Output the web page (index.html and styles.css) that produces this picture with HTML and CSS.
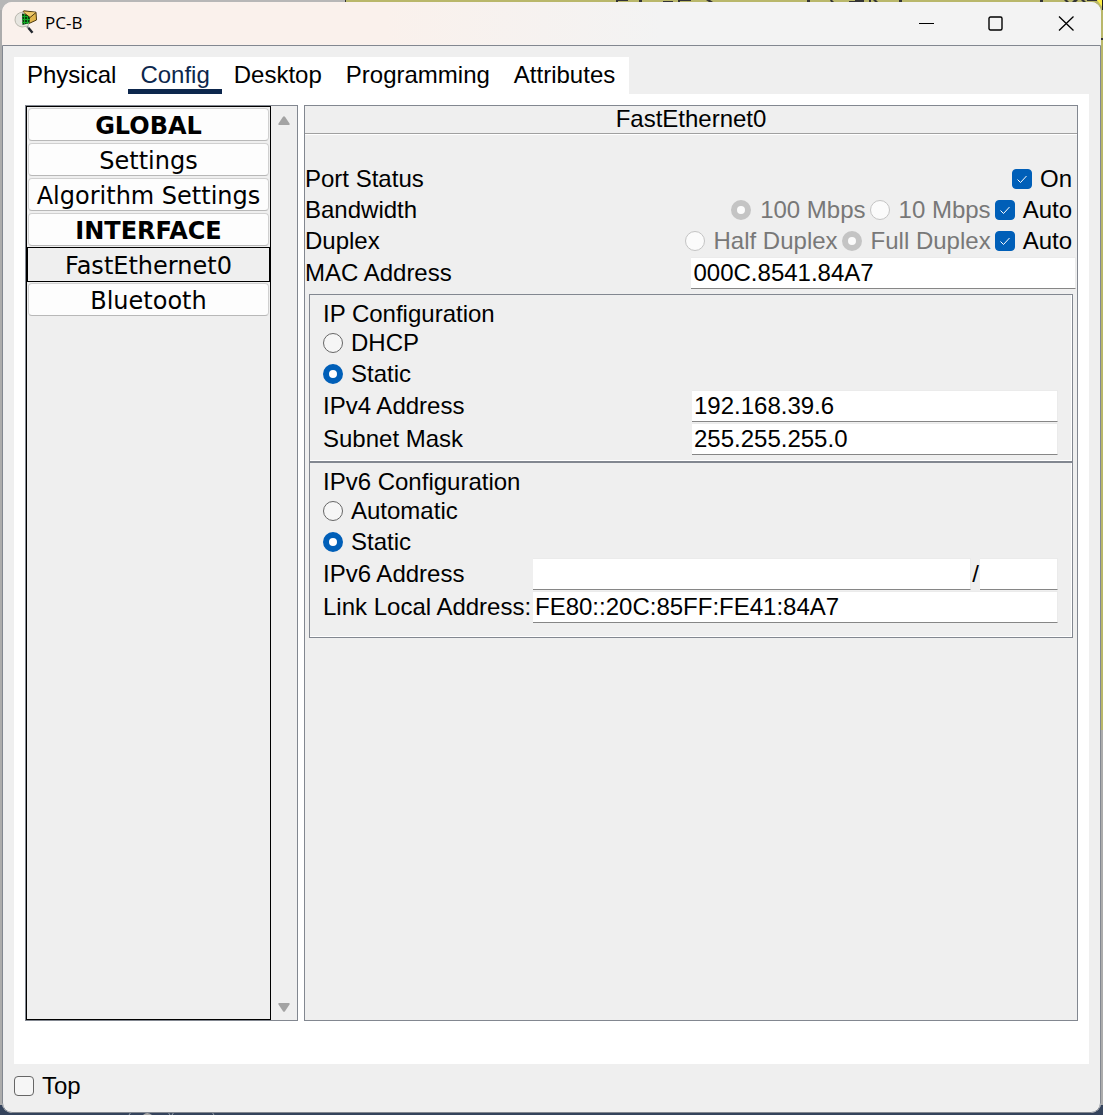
FILE: index.html
```html
<!DOCTYPE html>
<html lang="en">
<head>
<meta charset="utf-8">
<meta name="viewport" content="width=device-width, initial-scale=1">
<title>PC-B</title>
<link rel="stylesheet" href="styles.css">
</head>
<body>
<div class="desktop">
  <svg class="backdrop backdrop-top" viewBox="0 0 513 40" aria-hidden="true">
    <path d="M26 0h12v1H28v1h-2ZM49 0h3v2h-3ZM73 1h10v1H73ZM88 0h13v1H90v1h-2ZM116 0h4l3 2h-4ZM217 0h3v2h-3ZM240 0h2l2 2h-3ZM259 1h6v-1h9v2h-15ZM279 0h2v2h-2ZM283 0h3l2 2h-3ZM309 0h3v2h-3ZM450 0h3v2h-3ZM474 0h3l2 2h-3ZM484 0h4l-2 2h-4ZM491 0h3l2 2h-3ZM497 0h10v1h-10ZM511 38h2v2h-2Z" fill="#333"/>
    <path d="M507 0h6v8Z" fill="#ffef46"/>
    <path d="M512 0h1v10h-1Z" fill="#222"/>
  </svg>
  <svg class="backdrop backdrop-bottom" viewBox="0 0 330 3" aria-hidden="true">
    <path d="M29 3l2-3M68 0l2 3M74 0l-2 3M112 0l2 3" stroke="#9aa3ad" fill="none"/>
    <path d="M43 3q4-4 9 0Z" fill="#a8a8a8"/>
  </svg>
  <div class="window">
    <header class="titlebar">
      <svg class="app-icon" viewBox="0 0 24 24" aria-hidden="true">
        <path d="M8.500 2 L10 .8 L22 2.200 L22.500 10 L15 13.500 L9 12Z" fill="#e2b64c" stroke="#4b380f" stroke-width="1"/>
        <path d="M9 2 L16 7.500 L22 2.500" fill="#efca6d" stroke="#4b380f" stroke-width="1"/>
        <path d="M9 2 Q1 3 1 10 Q1.500 16 8 17 L14 16 L15 12Z" fill="#e6e5df" stroke="#bab8af" stroke-width="1"/>
        <path d="M8 3.500 Q13 4 16 8 L15.500 13 L8.500 15Z" fill="#063f0b"/>
        <path d="M8 6.500h5M8 9.500h8M8 12.500h7M10.500 4v10M13.500 6v8" stroke="#12a827" stroke-width="1" fill="none"/>
        <path d="M13 16.500 L15 18.500" stroke="#8b8f92" stroke-width="2"/>
        <path d="M14.500 18 L18.500 22.800" stroke="#22272e" stroke-width="2.400"/>
      </svg>
      <h1 class="title">PC-B</h1>
      <div class="window-controls">
        <button class="win-btn" aria-label="Minimize"><svg viewBox="0 0 16 16"><path d="M1 7.5H16" stroke="#000" fill="none"/></svg></button>
        <button class="win-btn" aria-label="Maximize"><svg viewBox="0 0 16 16"><rect x="1" y="1" width="13" height="13" rx="1.5" stroke="#000" stroke-width="1.4" fill="none"/></svg></button>
        <button class="win-btn" aria-label="Close"><svg viewBox="0 0 16 16"><path d="M1 .5 15.500 14.5M15.500 .5 1 14.5" stroke="#000" stroke-width="1.3" fill="none"/></svg></button>
      </div>
    </header>
    <main class="client">
      <nav class="tabs">
        <button class="tab">Physical</button>
        <button class="tab tab-active">Config</button>
        <button class="tab">Desktop</button>
        <button class="tab">Programming</button>
        <button class="tab">Attributes</button>
      </nav>
      <div class="page">
        <aside class="sidebar">
          <div class="list">
            <button class="item heading">GLOBAL</button>
            <button class="item">Settings</button>
            <button class="item">Algorithm Settings</button>
            <button class="item heading">INTERFACE</button>
            <button class="item selected">FastEthernet0</button>
            <button class="item">Bluetooth</button>
          </div>
          <div class="scrollbar">
            <svg viewBox="0 0 12 9" aria-hidden="true"><path d="M5 .8Q6 -.3 7 .8L11.5 7.5Q12 9 11 9H1Q0 9 .5 7.5Z" fill="#a3a3a3"/></svg>
            <svg viewBox="0 0 12 9" aria-hidden="true"><path d="M5 8.2Q6 9.3 7 8.2L11.5 1.5Q12 0 11 0H1Q0 0 .5 1.5Z" fill="#a3a3a3"/></svg>
          </div>
        </aside>
        <section class="panel">
          <h2 class="panel-title">FastEthernet0</h2>
          <div class="port">
            <div class="row">
              <span class="name">Port Status</span>
              <label class="choice"><input type="checkbox" checked>On</label>
            </div>
            <div class="row">
              <span class="name">Bandwidth</span>
              <label class="choice off"><input type="radio" name="bandwidth" checked disabled>100 Mbps</label>
              <label class="choice off"><input type="radio" name="bandwidth" disabled>10 Mbps</label>
              <label class="choice"><input type="checkbox" checked>Auto</label>
            </div>
            <div class="row">
              <span class="name">Duplex</span>
              <label class="choice off"><input type="radio" name="duplex" disabled>Half Duplex</label>
              <label class="choice off"><input type="radio" name="duplex" checked disabled>Full Duplex</label>
              <label class="choice"><input type="checkbox" checked>Auto</label>
            </div>
            <div class="field mac">
              <label for="mac">MAC Address</label>
              <input class="text" id="mac" type="text" value="000C.8541.84A7">
            </div>
          </div>
          <section class="group">
            <h3 class="group-title">IP Configuration</h3>
            <label class="choice"><input type="radio" name="ip">DHCP</label>
            <label class="choice"><input type="radio" name="ip" checked>Static</label>
            <div class="field ipv4">
              <label for="ip4">IPv4 Address</label>
              <input class="text" id="ip4" type="text" value="192.168.39.6">
            </div>
            <div class="field ipv4">
              <label for="mask">Subnet Mask</label>
              <input class="text" id="mask" type="text" value="255.255.255.0">
            </div>
          </section>
          <section class="group">
            <h3 class="group-title">IPv6 Configuration</h3>
            <label class="choice"><input type="radio" name="ip6mode">Automatic</label>
            <label class="choice"><input type="radio" name="ip6mode" checked>Static</label>
            <div class="field ipv6">
              <label for="ip6">IPv6 Address</label>
              <div class="prefixed">
                <input class="text" id="ip6" type="text">
                <label class="slash" for="prefix">/</label>
                <input class="text prefix" id="prefix" type="text">
              </div>
            </div>
            <div class="field ipv6">
              <label for="lla">Link Local Address:</label>
              <input class="text" id="lla" type="text" value="FE80::20C:85FF:FE41:84A7">
            </div>
          </section>
        </section>
      </div>
      <footer class="footer">
        <label class="choice"><input type="checkbox">Top</label>
      </footer>
    </main>
  </div>
</div>
</body>
</html>
```
FILE: styles.css
```css
* { box-sizing: border-box; }

body {
  margin: 0;
  font: 24px/28px "Liberation Sans", Arial, sans-serif;
  color: #000;
}

button, input { font: inherit; color: inherit; margin: 0; }
h1, h2, h3 { margin: 0; font-weight: normal; }

/* The desktop that shows round the window's edges */
.desktop {
  position: relative;
  min-height: 100vh;
  display: flex;
  padding: 2px;
  background:
    linear-gradient(#34435c, #34435c) 0 100% / 100% 10px no-repeat,
    linear-gradient(#b9b76a, #b9b76a) 100% 0 / 8px 730px no-repeat,
    linear-gradient(90deg, #b7b7b7 345px, #333 345px 346px, #b9b76a 346px) 0 0 / 100% 10px no-repeat,
    #acacac;
}
.backdrop { position: absolute; }
.backdrop-top { top: 0; right: 0; width: 513px; height: 40px; }
.backdrop-bottom { bottom: 0; left: 100px; width: 330px; height: 3px; }

.window {
  position: relative;
  flex: 1;
  display: flex;
  flex-direction: column;
  overflow: hidden;
  border-radius: 10px;
  background: #efefef;
}

/* Title bar */
.titlebar {
  display: flex;
  align-items: center;
  height: 43px;
  padding-left: 12px;
  background: linear-gradient(90deg, #faf1ec 35%, #f3f3f3 60%);
}
.app-icon { width: 24px; height: 24px; margin-bottom: 3px; }
.title {
  padding-left: 7px;
  font: 17px/24px "Open Sans", "Noto Sans", sans-serif;
  margin-bottom: 2px;
}
.window-controls { display: flex; margin-left: auto; }
.win-btn {
  display: grid;
  place-items: center;
  width: 70px;
  height: 42px;
  padding: 0;
  border: 0;
  background: none;
}
.win-btn svg { width: 16px; height: 16px; }

/* Client area */
.client {
  flex: 1;
  display: flex;
  flex-direction: column;
  padding: 11px 11px 0;
  border: 1px solid #828790;
  border-radius: 0 0 10px 10px;
}
.tabs {
  display: flex;
  align-self: flex-start;
  padding: 0 2px 0 1px;
  background: #fff;
}
.tab {
  height: 37px;
  padding: 3px 12px 0;
  border: 0;
  border-bottom: 5px solid transparent;
  background: none;
}
.tab-active { color: #0d274d; border-color: #0d274d; }

.page {
  flex: 1;
  display: flex;
  gap: 6px;
  padding: 11px 11px 43px;
  background: #fff;
}

/* Sidebar */
.sidebar {
  display: flex;
  width: 273px;
  border: 1px solid #828790;
  background: #efefef;
}
.list {
  flex: 1;
  display: flex;
  flex-direction: column;
  border: 1px solid #000;
}
.item {
  height: 33px;
  margin: 1px;
  padding: 2px 0 0;
  border: 1px solid #d0d0d0;
  border-bottom-color: #b8b8b8;
  border-radius: 4px;
  background: #fdfdfd;
  font-family: "DejaVu Sans", Verdana, sans-serif;
}
.heading { font-weight: bold; }
.selected {
  height: 35px;
  margin: 0;
  border-color: #000;
  border-radius: 0;
  background: #efefef;
}
.scrollbar {
  width: 26px;
  display: flex;
  flex-direction: column;
  justify-content: space-between;
  align-items: center;
  padding: 10px 0 8px;
}
.scrollbar svg { width: 12px; height: 9px; }

/* Settings panel */
.panel {
  flex: 1;
  border: 1px solid #828790;
  background: #efefef;
}
.panel-title {
  height: 28px;
  border-bottom: 1px solid #a0a0a0;
  box-shadow: 0 1px #fff;
  font-size: 24px;
  line-height: 26px;
  text-align: center;
}
.port { padding: 29px 1px 5px 0; }
.row {
  display: flex;
  align-items: center;
  gap: 4px;
  padding-right: 4px;
}
.name { margin-right: auto; }
.choice {
  display: flex;
  align-items: center;
  gap: 8px;
  height: 31px;
}
.off { gap: 9px; color: #787878; }

input[type="checkbox"], input[type="radio"] {
  appearance: none;
  flex: none;
  width: 20px;
  height: 20px;
  border: 1px solid #666;
  border-radius: 50%;
  background: #f6f6f6;
}
input[type="checkbox"] { border-radius: 4px; }
input[type="radio"]:checked { border: 6px solid #005fb8; background: #fff; }
input[type="radio"]:disabled { border-color: #c4c4c4; background: #fbfbfb; }
input[type="checkbox"]:checked {
  border-color: #005fb8;
  background: #005fb8 url("data:image/svg+xml,%3Csvg xmlns='http://www.w3.org/2000/svg' viewBox='0 0 18 18'%3E%3Cpath d='M4.5 9.5 7.5 12.5 13.5 6' fill='none' stroke='white'/%3E%3C/svg%3E") center / 18px 18px;
}

.field {
  display: grid;
  align-items: center;
  height: 33px;
}
.mac { grid-template-columns: 387fr 385fr; }
.ipv4 { grid-template-columns: 369fr 366fr; }
.ipv6 { grid-template-columns: 210px 1fr; }
.text {
  width: 100%;
  min-width: 0;
  height: 32px;
  padding: 0 2px;
  border: 1px solid #ebebeb;
  border-width: 1px 1px 1px 0;
  border-bottom-color: #868686;
  border-radius: 0;
  background: #fff;
}
.prefixed { display: flex; align-items: center; }
.prefix { width: 78px; flex: none; }
.slash { padding: 0 1px; }

.group {
  margin: 0 4px;
  padding: 5px 14px 6px 13px;
  border: 1px solid #828790;
  box-shadow: inset -1px -1px #fff;
}
.group + .group { padding-bottom: 14px; }
.group-title { font-size: 24px; line-height: 27px; }

.footer { padding: 6px 0 11px; }
```
